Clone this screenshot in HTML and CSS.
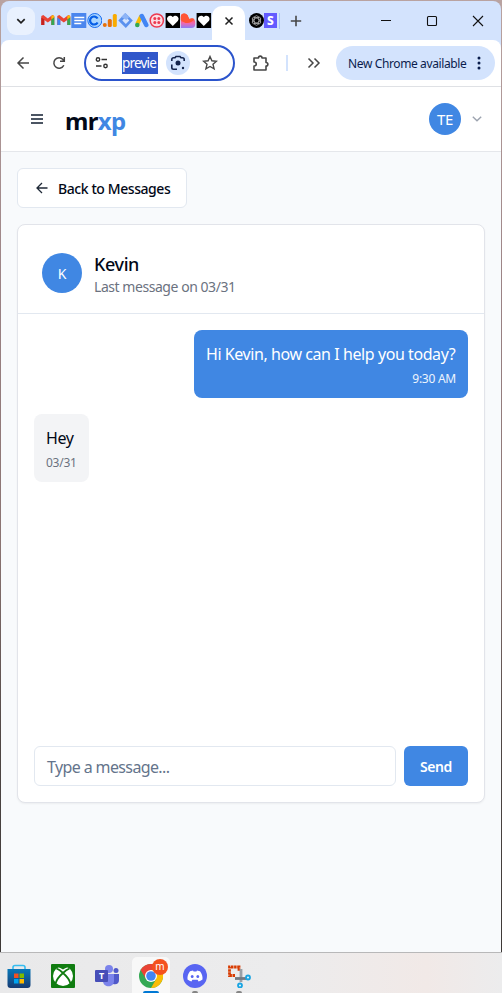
FILE: index.html
```html
<!DOCTYPE html>
<html lang="en">
<head>
<meta charset="utf-8">
<title>mrxp</title>
<link rel="stylesheet" href="styles.css">
</head>
<body>
<div class="window">
  <div class="tabs">
    <button class="tab-search"><svg width="12" height="12" viewBox="0 0 12 12"><path d="M2.300 4.200 6 7.800l3.700-3.600" fill="none" stroke="#1f1f1f" stroke-width="1.700"/></svg></button>
    <div class="favicons">
      <svg viewBox="0 0 15 15"><path d="M1 3v9h3V7l3.500 2.600L11 7v5h3V3l-2-1-4.500 3.600L3 2z" fill="#ea4335"/><path d="M1 4.500v7.500h3V6.500z" fill="#c5221f"/><path d="M11 6.500 14 4v8h-3z" fill="#34a853"/><path d="m11 3 2-1 1 2-3 2.500z" fill="#fbbc04"/></svg>
      <svg viewBox="0 0 15 15"><path d="M1 3v9h3V7l3.500 2.600L11 7v5h3V3l-2-1-4.500 3.600L3 2z" fill="#ea4335"/><path d="M1 4.500v7.500h3V6.500z" fill="#4285f4"/><path d="M11 6.500 14 4v8h-3z" fill="#34a853"/><path d="m11 3 2-1 1 2-3 2.500z" fill="#fbbc04"/></svg>
      <svg viewBox="0 0 15 15"><path d="M0 0h15v15H0z" fill="#4b86ee"/><path d="M3 4.500h10M3 7.500h10M3 10.500h7" stroke="#fff" stroke-width="1.500"/></svg>
      <svg viewBox="0 0 15 15"><circle cx="7.500" cy="7.500" r="7" fill="#a9d5ff" stroke="#176cf0"/><path d="M10.300 5.600a4 4 0 1 0 0 3.800" fill="none" stroke="#075fe7" stroke-width="2.200"/></svg>
      <svg viewBox="0 0 15 15"><circle cx="2.500" cy="12" r="2" fill="#e8710a"/><rect x="5.500" y="6" width="4" height="8" rx="1.500" fill="#e8710a"/><rect x="10.500" y="1" width="4" height="13" rx="1.500" fill="#f9ab00"/></svg>
      <svg viewBox="0 0 15 15"><path d="m7 0 7.500 7.500L7.500 15 0 7.500z" fill="#5a91ee"/><path d="m7.500 4 3.500 3.500L7.500 11 4 7.500z" fill="#d3e3fd"/><path d="m7 0 4 4-3 3-5-3z" fill="#8db4f6"/></svg>
      <svg viewBox="0 0 15 15"><path d="m7 3-4 8" stroke="#fbbc04" stroke-width="4"/><path d="m7.500 3 4.500 9" stroke="#4285f4" stroke-width="4.500" stroke-linecap="round"/><circle cx="3" cy="12" r="2.300" fill="#34a853"/></svg>
      <svg viewBox="0 0 15 15"><circle cx="7.500" cy="7.500" r="6.600" fill="#fbdde4" stroke="#ec3a50" stroke-width="1.500"/><g fill="#ec3a50"><circle cx="5.500" cy="5.500" r="1.500"/><circle cx="9.500" cy="5.500" r="1.500"/><circle cx="5.500" cy="9.500" r="1.500"/><circle cx="9.500" cy="9.500" r="1.500"/></g></svg>
      <svg viewBox="0 0 15 15"><path d="M.3 0h14.500v15H.3z"/><path d="M7.500 13 2.500 8C-.2 4.500 4.500.5 7.500 4c3-3.500 7.700.5 5 4z" fill="#fff"/></svg>
      <svg viewBox="0 0 15 15"><defs><linearGradient id="flame" x1="0" y1="0" x2="0" y2="1"><stop offset=".3" stop-color="#ff5a39"/><stop offset=".65" stop-color="#f367ae"/><stop offset="1" stop-color="#8e7df5"/></linearGradient></defs><path d="M.5 15V4c0-5 7-4 7.500 0l1 2c4-2 6 0 6 4.500 0 3-1 4.500-4 4.500z" fill="url(#flame)"/><path d="M.5 7V4c0-5 7-4 7.500 0l1 2c2-.8 4-.8 5 .5-3 3-8 6-13.500.5z" fill="#ff5436"/></svg>
      <svg viewBox="0 0 15 15"><path d="M.3 0h14.500v15H.3z"/><path d="M7.500 13 2.500 8C-.2 4.500 4.500.5 7.500 4c3-3.500 7.700.5 5 4z" fill="#fff"/></svg>
    </div>
    <div class="tab-active"><svg width="10" height="10" viewBox="0 0 10 10"><path d="m1.500 1.500 7 7m0-7-7 7" stroke="#1f1f1f" stroke-width="1.500"/></svg></div>
    <div class="after-tabs">
      <svg width="15" height="15" viewBox="0 0 15 15"><circle cx="7.500" cy="7.500" r="7.500"/><g fill="none" stroke="#ccc" stroke-width=".7"><ellipse cx="7.500" cy="7.500" rx="2.400" ry="4.800"/><ellipse cx="7.500" cy="7.500" rx="2.400" ry="4.800" transform="rotate(60 7.500 7.500)"/><ellipse cx="7.500" cy="7.500" rx="2.400" ry="4.800" transform="rotate(120 7.500 7.500)"/></g></svg>
      <span class="stripe">S</span><i></i>
    </div>
    <svg class="plus" width="12" height="12" viewBox="0 0 12 12"><path d="M6 .8v10.400M.8 6h10.400" stroke="#474747" stroke-width="1.600"/></svg>
    <div class="controls">
      <svg width="12" height="12" viewBox="0 0 12 12"><path d="M1 5.500h10" stroke="#111"/></svg>
      <svg width="12" height="12" viewBox="0 0 12 12"><rect x="1.500" y="1.500" width="9" height="9" rx="1" fill="none" stroke="#111" stroke-width="1.100"/></svg>
      <svg width="12" height="12" viewBox="0 0 12 12"><path d="m1 1 10 10m0-10L1 11" stroke="#111" stroke-width="1.100"/></svg>
    </div>
  </div>
  <div class="toolbar">
    <svg class="nav" width="14" height="14" viewBox="0 0 14 14"><path d="M13 7H2m5.500-5.500L2 7l5.500 5.500" fill="none" stroke="#474747" stroke-width="1.500"/></svg>
    <svg class="nav reload" width="14" height="14" viewBox="0 0 14 14"><path d="M11.800 9.200A5.200 5.200 0 1 1 11 3.600l1 1.400M12.300 1v4.300H8" fill="none" stroke="#474747" stroke-width="1.500"/></svg>
    <div class="omnibox">
      <svg width="14" height="14" viewBox="0 0 14 14"><g fill="none" stroke="#333" stroke-width="1.400"><circle cx="3" cy="3.500" r="1.700"/><path d="M6.500 3.500H12M1 10h5.500"/><circle cx="10.500" cy="10" r="1.700"/></g></svg>
      <span class="url">previe</span>
      <span class="lens"><svg width="16" height="16" viewBox="0 0 16 16"><path d="M1.800 6V4.500c0-1 .7-1.700 1.700-1.700H5L6 1.500h4l1 1.300h1.500c1 0 1.700.7 1.700 1.700V6M1.800 9.500v3c0 1 .7 1.700 1.700 1.700H7" fill="none" stroke="#15244c" stroke-width="1.600"/><circle cx="8" cy="8" r="2.500" fill="#15244c"/><circle cx="13" cy="13" r="1.200" fill="#15244c"/></svg></span>
      <svg class="star" width="16" height="16" viewBox="0 0 16 16"><path d="m8 1.500 1.900 4.300 4.600.4-3.500 3.100 1.100 4.600L8 11.500l-4.100 2.400L5 9.300 1.500 6.200l4.600-.4z" fill="none" stroke="#474747" stroke-width="1.400"/></svg>
    </div>
    <svg class="puzzle" width="18" height="18" viewBox="0 0 18 18"><path d="M2 4h4.500c0-2.500 3.500-2.500 3.500 0h4v4.500c2.500 0 2.500 3.500 0 3.500v4H2v-4c3 0 3-4 0-4z" fill="none" stroke="#474747" stroke-width="1.600" stroke-linejoin="round"/></svg>
    <i class="divider"></i>
    <svg class="more" width="14" height="12" viewBox="0 0 14 12"><path d="m1.500 1.500 4.500 4.500-4.500 4.500m6-9L12 6l-4.500 4.500" fill="none" stroke="#474747" stroke-width="1.500"/></svg>
    <div class="update"><span>New Chrome available</span><svg width="4" height="16" viewBox="0 0 4 16" fill="#0a1d4d"><circle cx="2" cy="3" r="1.500"/><circle cx="2" cy="8" r="1.500"/><circle cx="2" cy="13" r="1.500"/></svg></div>
  </div>
  <header class="header">
    <svg width="12" height="12" viewBox="0 0 12 12"><path d="M0 2h12M0 6h12M0 10h12" stroke="#4b5563" stroke-width="1.800"/></svg>
    <div class="logo">mr<span>xp</span></div>
    <div class="avatar small">TE</div>
    <svg class="chev" width="10" height="8" viewBox="0 0 10 8"><path d="m.8 1.800 4.200 4 4.200-4" fill="none" stroke="#9ca3af" stroke-width="1.400"/></svg>
  </header>
  <main>
    <button class="back"><svg width="12" height="12" viewBox="0 0 12 12"><path d="M11.500 6H1m5-5L1 6l5 5" fill="none" stroke="#1f2937" stroke-width="1.300"/></svg><span>Back to Messages</span></button>
    <section class="card">
      <div class="person"><div class="avatar">K</div><div><h1>Kevin</h1><p>Last message on 03/31</p></div></div>
      <div class="chat">
        <div class="bubble sent"><p>Hi Kevin, how can I help you today?</p><small>9:30 AM</small></div>
        <div class="bubble"><p>Hey</p><small>03/31</small></div>
      </div>
      <div class="compose"><div class="input">Type a message...</div><button>Send</button></div>
    </section>
  </main>
</div>
<footer class="taskbar">
  <div class="app"><svg width="24" height="26" viewBox="0 0 24 26"><defs><linearGradient id="bag" x1="0" y1="0" x2="0" y2="1"><stop stop-color="#0878b9"/><stop offset="1" stop-color="#173b73"/></linearGradient></defs><path d="M6 7V3.500C6 2 7 1.500 8 1.500h8c1 0 2 .5 2 2V7" fill="none" stroke="#35bdf0" stroke-width="1.600"/><path d="M.5 5h23v16a3 3 0 0 1-3 3h-17a3 3 0 0 1-3-3z" fill="url(#bag)"/><path d="M7 9.500h4.500V14H7z" fill="#f25022"/><path d="M12.500 9.500H17V14h-4.500z" fill="#7fba00"/><path d="M7 15h4.500v4.500H7z" fill="#00a4ef"/><path d="M12.500 15H17v4.500h-4.500z" fill="#ffb900"/></svg></div>
  <div class="app"><svg width="24" height="24" viewBox="0 0 24 24"><rect width="24" height="24" rx="1" fill="#107c10"/><circle cx="12" cy="12" r="10" fill="#fff"/><path d="M5 3.500c2-.8 5 .5 7 2 2-1.500 5-2.800 7-2l-1.500-2h-11z" fill="#107c10"/><path d="M5.500 4.500C8 5.500 10.500 7.500 12 9c1.500-1.500 4-3.500 6.500-4.500M12 9c-3.500 3-6.500 7-7.500 10.500M12 9c3.500 3 6.500 7 7.500 10.500" fill="none" stroke="#107c10" stroke-width="1.800"/></svg></div>
  <div class="app"><svg width="24" height="24" viewBox="0 0 24 24"><circle cx="14" cy="5" r="4" fill="#7b83eb"/><circle cx="21" cy="6.500" r="2.500" fill="#5059c9"/><path d="M17 10h7v6c0 4-3 5-6 4z" fill="#5059c9"/><path d="M8 10h11v7c0 7-11 7-11 0z" fill="#7b83eb"/><rect y="6" width="13" height="12" rx="1" fill="#464eb8"/><text x="6.500" y="15.300" text-anchor="middle" class="teams">T</text></svg></div>
  <div class="app active"><svg width="24" height="24" viewBox="0 0 24 24"><circle cx="12" cy="12" r="12" fill="#34a853"/><path d="M1.600 6A12 12 0 0 1 22.400 6H12l-5 9z" fill="#ea4335"/><path d="M22.400 6A12 12 0 0 1 12 24l5.200-9L12 6z" fill="#fbbc04"/><circle cx="12" cy="12" r="6" fill="#fff"/><circle cx="12" cy="12" r="4.800" fill="#4285f4"/></svg><b class="badge">m</b></div>
  <div class="app open"><svg width="24" height="24" viewBox="0 0 24 24"><circle cx="12" cy="12" r="12" fill="#5865f2"/><path d="M7 7.300 10 6.500l.6 1h2.800l.6-1 3 .8c2 2.700 2.800 5.200 2.500 8.200-1.400 1-2.700 1.500-3.900 1.900l-1-1.700H9.400l-1 1.700c-1.200-.4-2.500-.9-3.900-1.900-.3-3 .5-5.500 2.500-8.200z" fill="#fff"/><ellipse cx="9.200" cy="12.500" rx="1.400" ry="1.600" fill="#5865f2"/><ellipse cx="14.800" cy="12.500" rx="1.400" ry="1.600" fill="#5865f2"/></svg></div>
  <div class="app open"><svg width="24" height="24" viewBox="0 0 24 24"><path d="M8 11.500H2.500V3H12v4" fill="none" stroke="#d83b01" stroke-width="2.800" stroke-dasharray="2.500 .6"/><path d="M14 5v13" stroke="#9aa0a6" stroke-width="2.800"/><path d="M8 14.500h11" stroke="#737a82" stroke-width="2.800"/><g fill="#fff" stroke="#1ba5e2" stroke-width="2"><circle cx="21" cy="13.500" r="1.900"/><circle cx="13" cy="21.500" r="1.900"/></g></svg></div>
</footer>
</body>
</html>
```
FILE: styles.css
```css
* { box-sizing: border-box; }
body { margin: 0; width: 502px; height: 993px; overflow: hidden; background: linear-gradient(#b9a3a1, #9a8284 30%, #8a7472 55%, #4e4644 75%, #3a3634); color: #020817; font-family: "Noto Sans", "Open Sans", sans-serif; display: flex; flex-direction: column; }
p, h1 { margin: 0; }
button { font: inherit; color: inherit; }
svg { display: block; flex: none; }
.window { height: 952px; margin: 0 1px; padding-top: 1px; display: flex; flex-direction: column; }
.tabs { height: 39px; background: #d3e3fd; border-radius: 8px 8px 0 0; display: flex; align-items: center; flex: none; }
.tab-search { margin-left: 6px; width: 28px; height: 28px; border: 0; border-radius: 9px; background: #e9f1fe; display: grid; place-items: center; padding: 0; }
.favicons { display: flex; margin-left: 5px; width: 172px; }
.favicons svg { width: 15.600px; height: 15px; }
.tab-active { width: 33px; height: 34px; margin: 5px 0 0; border-radius: 10px 10px 0 0; background: #fff; display: grid; place-items: center; padding-bottom: 5px; padding-left: 1px; }
.after-tabs { display: flex; align-items: center; margin-left: 4px; }
.stripe { width: 13px; height: 15px; background: #635bff; color: #fff; font-size: 12px; line-height: 15px; font-weight: 800; text-align: center; }
.after-tabs i { width: 1px; height: 16px; background: #a8c7fa; margin-left: 2px; }
.plus { margin-left: 10px; }
.controls { margin-left: auto; margin-right: 17px; display: flex; gap: 34px; }
.toolbar { height: 47px; background: #fff; border-bottom: 1px solid #dfe1e5; border-radius: 8px 8px 0 0; display: flex; align-items: center; flex: none; position: relative; }
.toolbar::before { content: ""; position: absolute; z-index: -1; inset: 0 0 auto; height: 8px; background: #d3e3fd; }
.nav { margin-left: 15px; }
.reload { margin-left: 22px; }
.omnibox { width: 151px; height: 36px; margin-left: 18px; border: 2px solid #2b54cc; border-radius: 18px; display: flex; align-items: center; padding-left: 9px; }
.url { width: 36px; height: 22px; margin-left: 13px; background: #3057ca; color: #fff; font-size: 13.500px; line-height: 22px; letter-spacing: -.8px; white-space: nowrap; }
.lens { width: 24px; height: 24px; background: #d3e3fd; border-radius: 50%; display: grid; place-items: center; margin-left: 8px; }
.star { margin-left: 12px; }
.puzzle { margin-left: 17px; }
.divider { width: 2px; height: 16px; background: #d3e3fd; margin-left: 16px; }
.more { margin-left: 19px; }
.update { width: 159px; height: 34px; border-radius: 17px; margin-left: 15px; background: #d3e3fd; color: #0a1d4d; display: flex; align-items: center; padding-left: 12px; font-size: 12px; flex: none; }
.update span { width: 119px; white-space: nowrap; letter-spacing: -.38px; }
.update svg { margin-left: 10px; }
.header { height: 65px; background: #fff; border-bottom: 1px solid #e5e7eb; display: flex; align-items: center; padding: 0 19px 0 30px; flex: none; }
.logo { margin-left: 22px; font-size: 24px; line-height: 32px; font-weight: 700; color: #020817; padding-top: 3px; letter-spacing: -.7px; }
.logo span { color: #4087e3; }
.avatar { width: 40px; height: 40px; border-radius: 50%; background: #4087e3; color: #fff; display: grid; place-items: center; font-size: 14px; }
.avatar.small { width: 32px; height: 32px; margin-left: auto; font-size: 15px; letter-spacing: -.3px; }
.chev { margin-left: 11px; }
main { flex: 1; background: #f8fafc; padding: 16px; display: flex; flex-direction: column; align-items: flex-start; }
.back { height: 40px; width: 170px; border: 1px solid #e2e8f0; border-radius: 6px; background: #fff; display: flex; align-items: center; padding: 0 0 0 18px; gap: 10px; font-size: 14px; font-weight: 500; white-space: nowrap; letter-spacing: -.42px; }
.card { width: 468px; height: 579px; margin-top: 16px; border: 1px solid #e2e4ea; border-radius: 8px; background: #fff; box-shadow: 0 1px 2px #0000000d; display: flex; flex-direction: column; }
.person { height: 89px; border-bottom: 1px solid #e2e8f0; display: flex; gap: 12px; padding: 28px 24px 0; }
.person h1 { font-size: 18px; line-height: 22px; font-weight: 500; letter-spacing: -.4px; }
.person p { font-size: 14px; line-height: 20px; margin-top: 2px; color: #6b7280; letter-spacing: -.45px; }
.chat { flex: 1; padding: 16px; display: flex; flex-direction: column; align-items: flex-start; gap: 16px; }
.bubble { height: 68px; width: 55px; background: #f3f4f6; border-radius: 8px; padding: 12px; display: flex; flex-direction: column; white-space: nowrap; }
.bubble.sent { width: 274px; align-self: flex-end; background: #4087e3; color: #fff; }
.bubble p { font-size: 16px; line-height: 24px; letter-spacing: -.43px; }
.bubble small { font-size: 12px; line-height: 16px; margin-top: 5px; color: #6b7280; letter-spacing: -.25px; }
.sent small { text-align: right; color: #eef4fd; }
.compose { display: flex; gap: 8px; padding: 0 16px 16px; }
.input { flex: 1; height: 40px; border: 1px solid #e2e8f0; border-radius: 6px; padding: 1px 12px 0; line-height: 39px; font-size: 16px; color: #64748b; letter-spacing: -.62px; }
.compose button { width: 64px; height: 40px; border: 0; border-radius: 6px; background: #4087e3; color: #fff; font-size: 14px; font-weight: 600; padding: 0; letter-spacing: -.45px; }
.taskbar { height: 41px; border-top: 1px solid #b8b8b9; background: linear-gradient(90deg, #e9e9ea, #ececed 55%, #f1e9e7 85%, #ececed); display: flex; gap: 6px; }
.app { width: 38px; display: flex; justify-content: center; align-items: flex-start; padding-top: 11px; position: relative; }
.app.active { background: #f8f8f8; border-radius: 5px 5px 0 0; margin-top: 4px; padding-top: 7px; }
.app.active::after, .app.open::after { content: ""; position: absolute; bottom: 0; width: 16px; height: 2px; background: #0078d4; border-radius: 2px 2px 0 0; }
.app.open::after { width: 6px; background: #858585; }
.badge { position: absolute; left: 20px; top: 2px; width: 16px; height: 16px; border-radius: 50%; background: #f4511e; color: #fff; font-size: 10px; line-height: 14px; font-weight: 400; text-align: center; }
.teams { fill: #fff; font-size: 9px; font-weight: 700; }
```
